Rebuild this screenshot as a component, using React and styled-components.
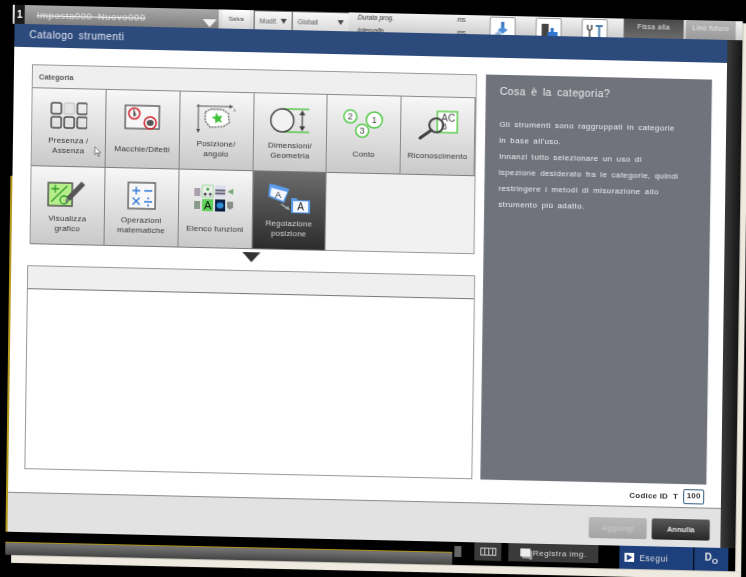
import React from 'react'
import styled, { createGlobalStyle } from 'styled-components'

const GlobalStyle = createGlobalStyle`
  html, body { margin: 0; background: #000; overflow: hidden; }
  body { font-family: "Liberation Sans", Arial, sans-serif; }
`

const CATEGORIES = [
  { label: ['Presenza /', 'Assenza'], Icon: PresenceIcon, pointer: true },
  { label: ['Macchie/Difetti'], Icon: DefectIcon },
  { label: ['Posizione/', 'angolo'], Icon: PositionIcon },
  { label: ['Dimensioni/', 'Geometria'], Icon: SizeIcon },
  { label: ['Conto'], Icon: CountIcon },
  { label: ['Riconoscimento'], Icon: RecognizeIcon },
  { label: ['Visualizza', 'grafico'], Icon: GraphIcon },
  { label: ['Operazioni', 'matematiche'], Icon: MathIcon },
  { label: ['Elenco funzioni'], Icon: ListIcon },
  { label: ['Regolazione', 'posizione'], Icon: AdjustIcon, active: true },
]

const HELP_LINES = [
  'Gli strumenti sono raggruppati in categorie',
  'in base all\'uso.',
  'Innanzi tutto selezionare un uso di',
  'ispezione desiderato fra le categorie, quindi',
  'restringere i metodi di misurazione allo',
  'strumento più adatto.',
]

function PresenceIcon() {
  const cells = [[0, 0], [13, 0], [26, 0], [0, 14], [13, 14], [26, 14]]
  return (
    <svg width="37" height="27" viewBox="0 0 37 27">
      {cells.map(([x, y], i) => (
        <rect key={i} x={x + 1} y={y + 1} width="10" height="11" rx="2" fill={i === 1 ? '#e4e4e4' : 'none'} stroke={i === 1 ? '#ccc' : '#4a4a4a'} strokeWidth="1.5" />
      ))}
    </svg>
  )
}

function DefectIcon() {
  return (
    <svg width="38" height="30" viewBox="0 0 38 30">
      <path d="M2 2H36V25H2Z" fill="#f7f7f7" stroke="#666" strokeWidth="1.5" />
      <path d="M10 4l3 8-3 1z" fill="#555" />
      <circle cx="11" cy="10" r="5.5" fill="none" stroke="#d2232a" strokeWidth="1.5" />
      <circle cx="27" cy="19" r="6" fill="none" stroke="#d2232a" strokeWidth="1.5" />
      <ellipse cx="27" cy="19" rx="3.5" ry="3" fill="#555" />
    </svg>
  )
}

function PositionIcon() {
  return (
    <svg width="42" height="32" viewBox="0 0 42 32">
      <path d="M3 1V28M1 3H36" stroke="#555" strokeWidth="1" fill="none" />
      <path d="M3 30l-2-4h4zM38 3l-4-2v4z" fill="#555" />
      <path d="M10 9l5-3 12 0 6 4 1 9-6 4-13 1-5-6z" fill="#fff" stroke="#666" strokeWidth="1.3" strokeDasharray="2 1" />
      <path d="M21 9l2 4 4-1-2 4 2 3-4-1-3 2 0-4-4-2 4-1z" fill="#3fc03a" />
      <text x="38" y="8" fontSize="5" fontFamily="Liberation Sans" fill="#666">x</text>
    </svg>
  )
}

function SizeIcon() {
  return (
    <svg width="42" height="27" viewBox="0 0 42 27">
      <path d="M13 2H40M13 25H40" stroke="#59c84a" strokeWidth="1.6" />
      <circle cx="13" cy="13.5" r="11.5" fill="#f2f2f2" stroke="#4a4a4a" strokeWidth="1.5" />
      <path d="M33 5V22" stroke="#444" strokeWidth="1.2" />
      <path d="M33 3l-3 5h6zM33 24l-3-5h6z" fill="#444" />
    </svg>
  )
}

function CountIcon() {
  const items = [['2', 8, 9, 6.5], ['1', 32, 12, 8], ['3', 20, 23, 6.5]]
  return (
    <svg width="44" height="32" viewBox="0 0 44 32">
      {items.map(([n, x, y, r]) => (
        <g key={n}>
          <circle cx={x} cy={y} r={r} fill="#fff" stroke="#55c94a" strokeWidth="1.5" />
          <text x={x} y={y + 3} textAnchor="middle" fontSize="9" fontFamily="Liberation Sans" fill="#444">{n}</text>
        </g>
      ))}
    </svg>
  )
}

function RecognizeIcon() {
  return (
    <svg width="42" height="30" viewBox="0 0 42 30">
      <rect x="20" y="1" width="20" height="21" fill="#fff" stroke="#5fcf50" strokeWidth="1.5" />
      <text x="24" y="11" fontSize="10" fontFamily="Liberation Sans" fill="#444">AC</text>
      <text x="24" y="19" fontSize="9" fontFamily="Liberation Sans" fill="#444">B</text>
      <circle cx="19" cy="15" r="7" fill="none" stroke="#444" strokeWidth="2" />
      <path d="M14 20L3 28" stroke="#444" strokeWidth="3" strokeLinecap="round" />
    </svg>
  )
}

function GraphIcon() {
  return (
    <svg width="40" height="28" viewBox="0 0 40 28">
      <rect x="1" y="3" width="24" height="23" fill="#b6ee8a" stroke="#555" strokeWidth="1.5" />
      <path d="M4 9h8M8 5v8M4 22L20 6" stroke="#2f9a2c" strokeWidth="1.3" fill="none" />
      <circle cx="17" cy="20" r="4" fill="none" stroke="#2f9a2c" strokeWidth="1.3" />
      <path d="M21 19L36 3" stroke="#555" strokeWidth="5" />
      <path d="M18 23l1-5 3 3z" fill="#777" />
    </svg>
  )
}

function MathIcon() {
  return (
    <svg width="29" height="28" viewBox="0 0 29 28">
      <rect x="1" y="1" width="27" height="26" fill="#f7f7f7" stroke="#666" strokeWidth="1.5" />
      <path d="M5 9h8M9 5v8M17 9h8M5.500 16l7 7M12.500 16l-7 7M17 20h8" stroke="#2f79d8" strokeWidth="1.3" />
      <circle cx="21" cy="16.500" r="1" fill="#2f79d8" />
      <circle cx="21" cy="23.500" r="1" fill="#2f79d8" />
    </svg>
  )
}

function ListIcon() {
  return (
    <svg width="42" height="28" viewBox="0 0 42 28">
      <rect x="0" y="4" width="6" height="8" fill="#a9a0b0" />
      <rect x="8" y="1" width="11" height="12" fill="#eee" stroke="#6c6" strokeWidth=".6" />
      <circle cx="11" cy="10" r="1.500" fill="#444" />
      <circle cx="16" cy="10" r="1.500" fill="#555" />
      <circle cx="13.500" cy="5" r="1.500" fill="#3a3" />
      <rect x="21" y="1" width="10" height="12" fill="#dde" />
      <path d="M21 6h10M21 9h10" stroke="#445" strokeWidth="1.500" />
      <path d="M33 7l6-3v6z" fill="#7aa87a" />
      <rect x="0" y="17" width="6" height="8" fill="#8a9a8a" />
      <rect x="8" y="15" width="11" height="12" fill="#5fd05a" />
      <text x="13.500" y="25" textAnchor="middle" fontSize="11" fontFamily="Liberation Sans" fill="#111">A</text>
      <rect x="21" y="15" width="10" height="12" fill="#0a1f44" />
      <ellipse cx="26" cy="21" rx="3.500" ry="3" fill="#2f8fd8" />
      <path d="M33 17h6v6l-3 2-3-2z" fill="#8a8f86" />
    </svg>
  )
}

function AdjustIcon() {
  return (
    <svg width="44" height="32" viewBox="0 0 44 32">
      <path d="M2 1l6 1 14 4-5 14-16-6z" fill="#5a9cec" />
      <path d="M4 5l16 4-4 9-13-5z" fill="#f4f7ff" />
      <text x="11" y="15" textAnchor="middle" fontSize="9" fontFamily="Liberation Sans" fill="#222">A</text>
      <path d="M24 15h5l2 2h12v13H24z" fill="#5a9cec" />
      <rect x="26" y="18" width="15" height="11" fill="#f4f7ff" />
      <text x="33.500" y="27" textAnchor="middle" fontSize="10" fontFamily="Liberation Sans" fill="#222">A</text>
      <path d="M14 21l6 4" stroke="#9aa" strokeWidth="1.500" />
      <path d="M23 27l-5-1 3-3z" fill="#9aa" />
    </svg>
  )
}

function PointerIcon() {
  return (
    <svg width="8" height="12" viewBox="0 0 8 12">
      <path d="M1 1v8l2-2 2 4 1-1-2-3h3z" fill="#fff" stroke="#555" strokeWidth=".7" />
    </svg>
  )
}

function ToolIcon({ kind }) {
  if (kind === 0) {
    return (
      <svg width="20" height="16" viewBox="0 0 20 16">
        <path d="M10 1v6" stroke="#2f6fc0" strokeWidth="3" />
        <path d="M5 9l5-3 5 3-5 4z" fill="#4c8fd8" />
        <path d="M2 13l4-3 3 3-3 3z" fill="#9db7d8" />
      </svg>
    )
  }
  if (kind === 1) {
    return (
      <svg width="20" height="16" viewBox="0 0 20 16">
        <rect x="3" y="2" width="7" height="14" fill="#444" />
        <path d="M12 6h3v4h4v6H9v-6h3z" fill="#2f76d0" />
      </svg>
    )
  }
  return (
    <svg width="20" height="16" viewBox="0 0 20 16">
      <path d="M3 2v4l2 2v8M7 2v4L5 8" stroke="#555" strokeWidth="1.600" fill="none" />
      <path d="M11 3h7M14.500 3v13" stroke="#4c7fb0" strokeWidth="2" fill="none" />
    </svg>
  )
}

export default function App() {
  return (
    <>
      <GlobalStyle />
      <Photo>
        <PhotoRow>
          <Screen>
            <TopBar>
              <TitleArea>
                <Badge>1</Badge>
                <Title>Imposta000 Nuovo000</Title>
                <TitleCaret />
              </TitleArea>
              <SaveTab>Salva</SaveTab>
              <SelectTab $w={38}>Modif.<SelectCaret /></SelectTab>
              <SelectTab $w={57}>Globali<SelectCaret /></SelectTab>
              <Timing>
                <TimingRow><span>Durata prog.</span><span>ms</span></TimingRow>
                <TimingRow><span>Intervallo</span><span>ms</span></TimingRow>
              </Timing>
              <ToolGroup>
                {[0, 1, 2].map((k) => (
                  <ToolButton key={k}><ToolIcon kind={k} /></ToolButton>
                ))}
              </ToolGroup>
              <ModeTab $on>Fissa alla</ModeTab>
              <ModeTab>Lino futuro</ModeTab>
            </TopBar>
            <Middle>
              <YellowRail />
              <Dialog>
                <DialogTitle>Catalogo strumenti</DialogTitle>
                <DialogBody>
                  <Columns>
                    <LeftColumn>
                      <CategoryBox>
                        <BoxHeader>Categoria</BoxHeader>
                        <CategoryGrid>
                          {CATEGORIES.map(({ label, Icon, pointer, active }) => (
                            <CategoryCell key={label[0]} $active={active}>
                              <IconSlot><Icon /></IconSlot>
                              <CellLabel $active={active}>
                                {label.map((l) => <div key={l}>{l}</div>)}
                              </CellLabel>
                              {pointer && <Pointer><PointerIcon /></Pointer>}
                            </CategoryCell>
                          ))}
                        </CategoryGrid>
                      </CategoryBox>
                      <DownArrow />
                      <ToolList>
                        <ListHeader />
                      </ToolList>
                    </LeftColumn>
                    <HelpPanel>
                      <HelpTitle>Cosa è la categoria?</HelpTitle>
                      {HELP_LINES.map((l) => <HelpLine key={l}>{l}</HelpLine>)}
                    </HelpPanel>
                  </Columns>
                  <CodeRow>
                    <span>Codice ID</span>
                    <span>T</span>
                    <CodeBox>100</CodeBox>
                  </CodeRow>
                </DialogBody>
                <Footer>
                  <FooterButton $disabled>Aggiungi</FooterButton>
                  <FooterButton>Annulla</FooterButton>
                </Footer>
              </Dialog>
              <SideRail />
            </Middle>
            <TaskBar>
              <Well>
                <WellBlack />
                <WellGray />
              </Well>
              <MiniBox />
              <TaskButton $w={27}><LayoutGlyph /></TaskButton>
              <TaskButton $w={90}><RecordGlyph />Registra img.</TaskButton>
              <RunButton><RunGlyph />Esegui</RunButton>
              <CornerButton>D<sub>O</sub></CornerButton>
            </TaskBar>
          </Screen>
          <RightEdge />
        </PhotoRow>
        <BottomEdge />
      </Photo>
    </>
  )
}

const Photo = styled.div`
  width: 746px;
  height: 577px;
  box-sizing: border-box;
  padding: 13px 0 0 9px;
  transform: skew(-0.8deg, 1.3deg);
  filter: blur(0.4px);
`

const PhotoRow = styled.div`
  display: flex;
`

const Screen = styled.div`
  width: 730px;
  height: 550px;
  display: flex;
  flex-direction: column;
  background: #000;
`

const RightEdge = styled.div`
  width: 6px;
  margin-top: 2px;
  background: #eeeadf;
`

const BottomEdge = styled.div`
  height: 8px;
  width: 730px;
  margin-left: 6px;
  background: #eeeadf;
`

const TopBar = styled.div`
  height: 19px;
  display: flex;
  overflow: hidden;
  padding-left: 2px;
  background: linear-gradient(#f2f2f2, #cfcfcf);
`

const TitleArea = styled.div`
  width: 204px;
  display: flex;
  align-items: center;
  position: relative;
  background: linear-gradient(#a9a9a9, #7f7f7f);
`

const Badge = styled.div`
  width: 10px;
  height: 19px;
  background: #1a1a1a;
  color: #fff;
  font-size: 10px;
  font-weight: bold;
  text-align: center;
  line-height: 19px;
`

const Title = styled.div`
  margin-left: 12px;
  color: #e6e6e6;
  font-size: 9.5px;
  letter-spacing: 0.6px;
  word-spacing: 2px;
  text-decoration: line-through;
  text-decoration-color: #f0f0f0;
`

const TitleCaret = styled.div`
  position: absolute;
  right: 2px;
  bottom: 1px;
  border-left: 7px solid transparent;
  border-right: 7px solid transparent;
  border-top: 8px solid #f2f2f2;
`

const SaveTab = styled.div`
  width: 27px;
  margin-left: 4px;
  background: linear-gradient(#fff, #d4d4d4);
  font-size: 6px;
  line-height: 18px;
  text-align: center;
  color: #444;
`

const SelectTab = styled.div`
  width: ${(p) => p.$w}px;
  margin-left: 4px;
  margin-right: -4px;
  box-sizing: border-box;
  border-left: 1px solid #555;
  border-top: 1px solid #666;
  padding: 0 5px;
  display: flex;
  align-items: center;
  justify-content: space-between;
  font-size: 6.5px;
  color: #555;
  background: linear-gradient(#f8f8f8, #dadada);
`

const SelectCaret = styled.i`
  border-left: 3.500px solid transparent;
  border-right: 3.500px solid transparent;
  border-top: 5px solid #444;
`

const Timing = styled.div`
  width: 108px;
  margin-left: 13px;
  font-size: 6.5px;
  font-style: italic;
  color: #333;
`

const TimingRow = styled.div`
  display: flex;
  justify-content: space-between;
  height: 13px;
  padding-top: 1px;
  box-sizing: border-box;
`

const ToolGroup = styled.div`
  display: flex;
  gap: 20px;
  margin-left: 24px;
`

const ToolButton = styled.div`
  width: 26px;
  height: 24px;
  margin-top: 1px;
  box-sizing: border-box;
  border: 1px solid #999;
  border-radius: 2px 2px 0 0;
  background: #fff;
  display: flex;
  justify-content: center;
  padding-top: 3px;
`

const ModeTab = styled.div`
  width: ${(p) => (p.$on ? 60 : 50)}px;
  margin-left: ${(p) => (p.$on ? 16 : 2)}px;
  background: ${(p) => (p.$on ? 'linear-gradient(#4a4a4a, #6a6a6a)' : 'linear-gradient(#b5b5b5, #9a9a9a)')};
  color: #eee;
  font-size: 6.5px;
  letter-spacing: 0.5px;
  text-align: center;
  line-height: 15px;
`

const Middle = styled.div`
  flex: 1;
  min-height: 0;
  display: flex;
`

const YellowRail = styled.div`
  width: 2px;
  background: linear-gradient(#000 30%, #b59a1e 30%);
`

const Dialog = styled.div`
  width: 713px;
  display: flex;
  flex-direction: column;
  background: #fff;
`

const DialogTitle = styled.div`
  height: 23px;
  box-sizing: border-box;
  padding-left: 15px;
  background: #2d4a7c;
  color: #e8ecf4;
  font-size: 10px;
  letter-spacing: 0.5px;
  word-spacing: 2px;
  line-height: 21px;
`

const DialogBody = styled.div`
  flex: 1;
  box-sizing: border-box;
  padding: 17px 15px 0 18px;
`

const Columns = styled.div`
  display: grid;
  grid-template-columns: 445px 226px;
  gap: 9px;
  height: 405px;
`

const LeftColumn = styled.div`
  display: flex;
  flex-direction: column;
`

const CategoryBox = styled.div`
  height: 180px;
  box-sizing: border-box;
  border: 1px solid #9a9a9a;
  background: #f1f1f1;
`

const BoxHeader = styled.div`
  height: 23px;
  padding-left: 6px;
  font-size: 7.500px;
  font-weight: bold;
  color: #555;
  line-height: 23px;
  border-bottom: 1px solid #8a8a8a;
  background: #efefef;
  box-sizing: border-box;
`

const CategoryGrid = styled.div`
  display: grid;
  grid-template-columns: repeat(6, 1fr);
  grid-auto-rows: 78px;
`

const CategoryCell = styled.div`
  position: relative;
  box-sizing: border-box;
  border-right: 1.500px solid #7d7d7d;
  border-bottom: 1.500px solid #7d7d7d;
  display: flex;
  flex-direction: column;
  align-items: center;
  background: ${(p) => (p.$active ? 'linear-gradient(#6b6b6b, #2c2c2c)' : 'linear-gradient(#f7f7f7, #c9c9c9)')};
`

const IconSlot = styled.div`
  height: 44px;
  display: flex;
  align-items: center;
  justify-content: center;
  margin-top: 6px;
`

const CellLabel = styled.div`
  flex: 1;
  margin-bottom: 10px;
  display: flex;
  flex-direction: column;
  justify-content: center;
  text-align: center;
  font-size: 8px;
  line-height: 10px;
  letter-spacing: 0.2px;
  color: ${(p) => (p.$active ? '#d8d8d8' : '#333')};
`

const Pointer = styled.div`
  position: absolute;
  left: 62px;
  top: 54px;
`

const DownArrow = styled.div`
  width: 0;
  align-self: center;
  margin: 3px 0 8px;
  border-left: 9px solid transparent;
  border-right: 9px solid transparent;
  border-top: 10px solid #333;
  transform: translateX(-1px);
`

const ToolList = styled.div`
  height: 204px;
  width: 448px;
  margin-left: -2px;
  box-sizing: border-box;
  border: 1px solid #999;
  background: #fff;
`

const ListHeader = styled.div`
  height: 23px;
  background: #efefef;
  border-bottom: 1px solid #777;
  box-sizing: border-box;
`

const HelpPanel = styled.div`
  background: #70737b;
  padding: 10px 14px;
  color: #eef0f2;
`

const HelpTitle = styled.div`
  font-size: 10.500px;
  letter-spacing: 0.4px;
  word-spacing: 2px;
  margin-bottom: 20px;
`

const HelpLine = styled.div`
  font-size: 8px;
  line-height: 16px;
  letter-spacing: 0.4px;
  word-spacing: 1.500px;
  white-space: nowrap;
`

const CodeRow = styled.div`
  margin-top: 5px;
  padding-right: 2px;
  display: flex;
  justify-content: flex-end;
  align-items: center;
  gap: 5px;
  font-size: 8px;
  font-weight: bold;
  letter-spacing: 0.2px;
  color: #333;
`

const CodeBox = styled.div`
  width: 21px;
  height: 15px;
  box-sizing: border-box;
  border: 1.500px solid #2d5a80;
  border-radius: 2px;
  text-align: center;
  line-height: 12px;
`

const Footer = styled.div`
  height: 40px;
  box-sizing: border-box;
  padding: 11px 11px 0 0;
  border-top: 1px solid #8c8c8c;
  background: #e2e2e2;
  display: flex;
  justify-content: flex-end;
  align-items: flex-start;
  gap: 5px;
`

const FooterButton = styled.div`
  width: 58px;
  height: 21px;
  border-radius: 2px;
  font-size: 7.500px;
  font-weight: bold;
  text-align: center;
  line-height: 21px;
  color: ${(p) => (p.$disabled ? '#c4c4c4' : '#e8e8e8')};
  background: ${(p) => (p.$disabled ? 'linear-gradient(#b8b8b8, #a4a4a4)' : 'linear-gradient(#585858, #262626)')};
`

const SideRail = styled.div`
  width: 15px;
  background: linear-gradient(90deg, #3a3a3a, #151515);
`

const TaskBar = styled.div`
  height: 23px;
  display: flex;
  background: #000;
`

const Well = styled.div`
  width: 447px;
  display: flex;
  flex-direction: column;
`

const WellBlack = styled.div`
  height: 11px;
  box-sizing: border-box;
  border-bottom: 1.500px solid #b59a1e;
`

const WellGray = styled.div`
  flex: 1;
  background: linear-gradient(#777, #444);
`

const MiniBox = styled.div`
  width: 7px;
  height: 11px;
  margin: 4px 0 0 2px;
  background: #666;
`

const TaskButton = styled.div`
  width: ${(p) => p.$w}px;
  height: 18px;
  margin-left: ${(p) => (p.$w > 50 ? 7 : 13)}px;
  box-sizing: border-box;
  background: #3a3a3a;
  color: #ddd;
  font-size: 8px;
  letter-spacing: 0.5px;
  display: flex;
  align-items: center;
  justify-content: center;
  gap: 3px;
`

const LayoutGlyph = styled.i`
  width: 14px;
  height: 6px;
  border: 1px solid #ccc;
  background: repeating-linear-gradient(90deg, transparent 0 3px, #ccc 3px 4px);
`

const RecordGlyph = styled.i`
  width: 10px;
  height: 8px;
  background: #eee;
  box-shadow: 2px 2px 0 #999;
`

const RunButton = styled.div`
  width: 74px;
  margin-left: 21px;
  background: #1d3f7c;
  color: #ddd;
  font-size: 8.500px;
  letter-spacing: 0.5px;
  display: flex;
  align-items: center;
  padding-left: 5px;
  box-sizing: border-box;
  gap: 5px;
`

const RunGlyph = styled.i`
  width: 10px;
  height: 9px;
  background: #fff;
  clip-path: polygon(0 0, 100% 0, 100% 100%, 0 100%, 0 0, 25% 15%, 25% 85%, 80% 50%, 25% 15%);
`

const CornerButton = styled.div`
  width: 34px;
  margin-left: 1px;
  background: #1d3f7c;
  color: #e8e8e8;
  font-size: 10px;
  font-weight: bold;
  text-align: center;
  line-height: 20px;
  sub {
    font-size: 8px;
    line-height: 0;
  }
`
